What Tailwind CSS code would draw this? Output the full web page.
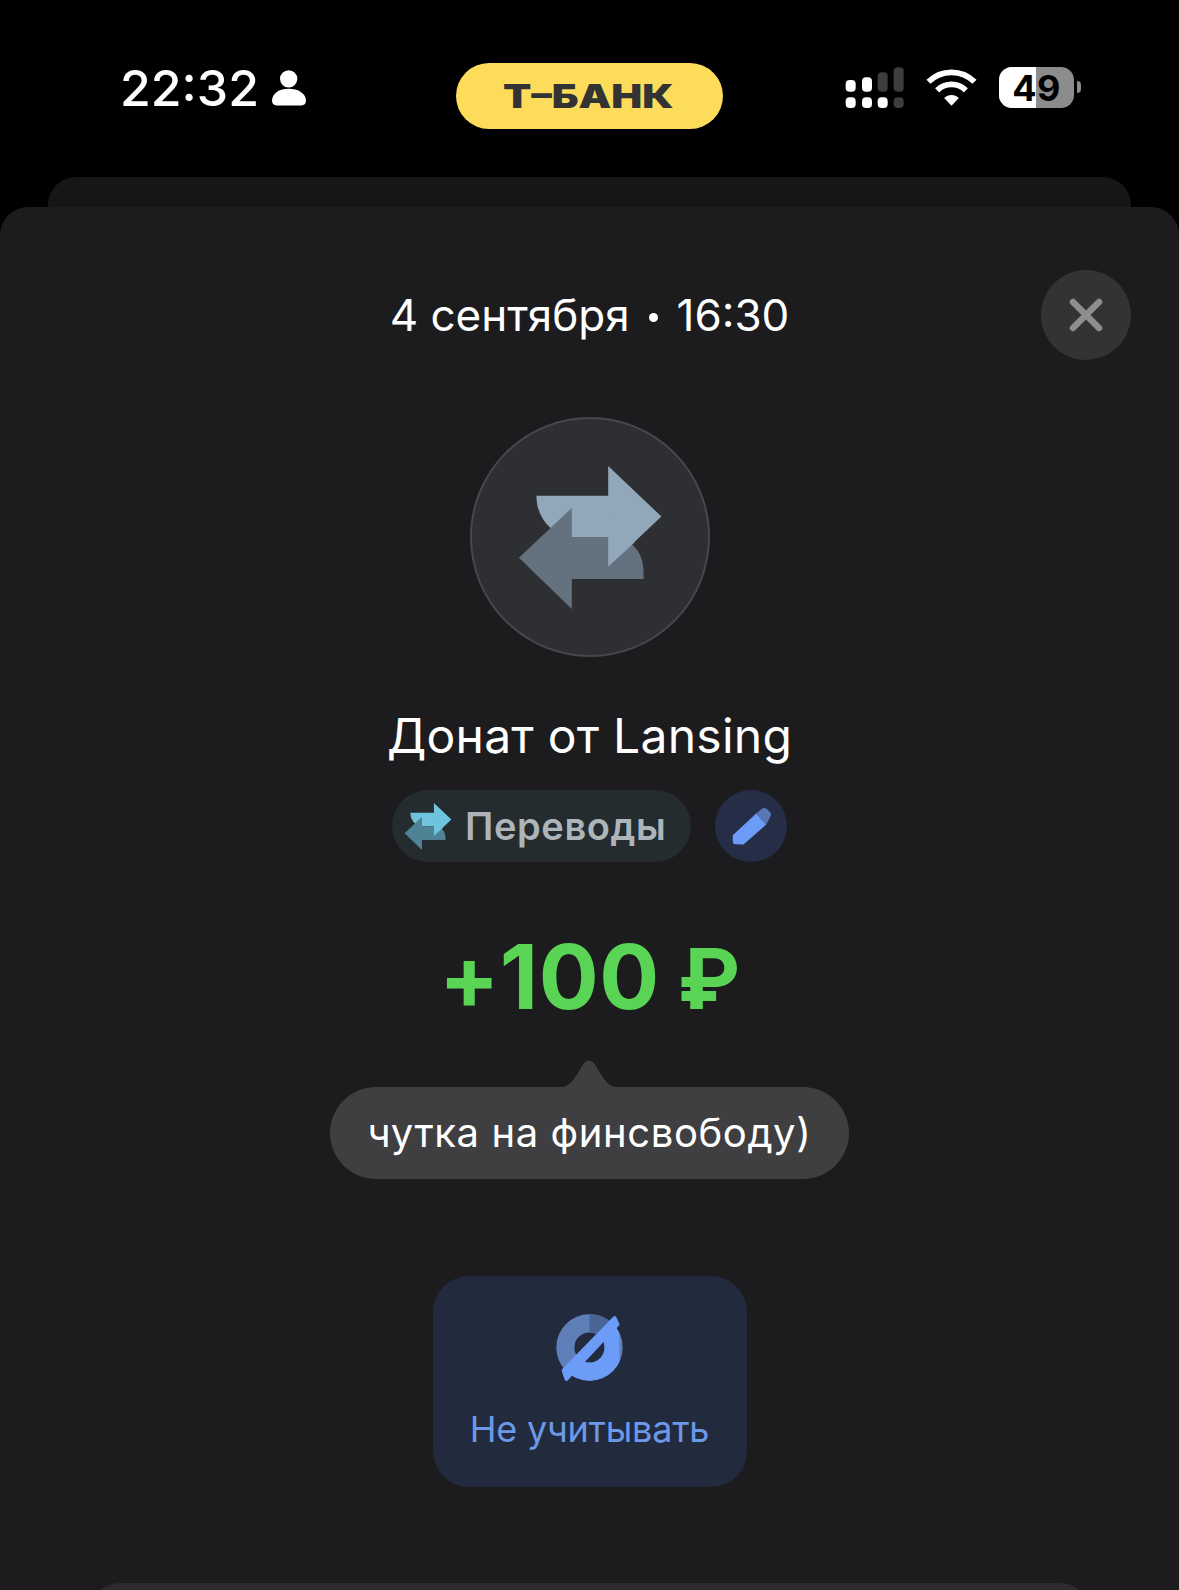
<!DOCTYPE html>
<html lang="ru">
<head>
    <meta charset="UTF-8">
    <meta name="viewport" content="width=device-width, initial-scale=1.0">
    <title>Донат от Lansing</title>
    <script src="https://cdn.jsdelivr.net/npm/@tailwindcss/browser@4"></script>
</head>
<body class="w-[1179px] h-[1590px] overflow-hidden bg-black text-white font-['Inter',sans-serif]">
    <!-- Status bar -->
    <header class="h-[177px] flex items-start pl-[120px]">
        <div class="w-[336px] h-[60px] mt-[58px] flex items-center gap-[13px]">
            <span class="text-[50px] leading-[60px] font-medium">22:32</span>
            <svg class="w-[34px] h-[36px]" viewBox="545 92 102 107" fill="#fff">
                <circle cx="595" cy="118" r="26"/>
                <path d="M545 184c0-22 22-36 50-36s52 14 52 36c0 9-6 14-14 14h-74c-8 0-14-5-14-14z"/>
            </svg>
        </div>
        <div class="w-[267px] h-[66px] mt-[63px] pr-[3px] rounded-full bg-[#fcdc5a] flex items-center justify-center">
            <span class="text-[33px] leading-none font-black text-[#333333] scale-x-[1.25]">Т–БАНК</span>
        </div>
        <div class="ml-[120px] mt-[65px] flex items-start">
            <!-- signal -->
            <svg class="w-[64px] h-[45px]" viewBox="130 75 192 135">
                <g fill="#fff">
                    <rect x="138" y="120" width="30" height="35" rx="12"/>
                    <rect x="187" y="112" width="30" height="43" rx="12"/>
                    <rect x="138" y="172" width="30" height="32" rx="12"/>
                    <rect x="187" y="172" width="30" height="32" rx="12"/>
                    <rect x="234" y="172" width="30" height="32" rx="12"/>
                </g>
                <g fill="#3d3d3d">
                    <rect x="234" y="97" width="30" height="58" rx="12"/>
                    <rect x="282" y="82" width="30" height="73" rx="12"/>
                    <rect x="282" y="172" width="30" height="32" rx="12"/>
                </g>
            </svg>
            <!-- wifi -->
            <svg class="w-[51px] h-[38px] ml-[19px] mt-[4px]" viewBox="376 83 158 119" fill="none" stroke="#fff" stroke-width="18">
                <path d="M383 123A102 102 0 0 1 527 123"/>
                <path d="M410 150A64 64 0 0 1 500 150"/>
                <path d="M432 174A32 32 0 0 1 478 174L455 198Z" fill="#fff" stroke="none"/>
            </svg>
            <!-- battery -->
            <div class="relative w-[75px] h-[41px] ml-[22px] mt-[2px] rounded-[13px] overflow-hidden bg-[#8c8c8c] flex items-center justify-center">
                <div class="absolute inset-y-0 left-0 w-[37px] bg-white"></div>
                <span class="relative text-[36px] leading-none font-bold text-black tracking-[0.5px]">49</span>
            </div>
            <div class="w-[4px] h-[12px] ml-[3px] mt-[16px] rounded-r-full bg-[#8c8c8c]"></div>
        </div>
    </header>

    <!-- Card behind the sheet -->
    <div class="h-[30px] mx-[48px] rounded-t-[28px] bg-[#161618]"></div>

    <!-- Sheet -->
    <main class="rounded-t-[28px] bg-[#1c1c1e] flex flex-col items-center">
        <div class="w-full mt-[63px] grid grid-cols-[1fr_auto_1fr] items-center">
            <div></div>
            <div class="text-[44px] leading-[60px] flex items-center gap-[19px]">
                <span>4 сентября</span>
                <span class="w-[9px] h-[9px] mt-[4px] rounded-full bg-white"></span>
                <span>16:30</span>
            </div>
            <button class="justify-self-end mr-[48px] w-[90px] h-[90px] rounded-full bg-[#333335] flex items-center justify-center">
                <svg class="w-[34px] h-[34px]" viewBox="0 0 34 34" fill="none" stroke="#8e8e90" stroke-width="6.5" stroke-linecap="round">
                    <path d="M4 4l26 26M30 4L4 30"/>
                </svg>
            </button>
        </div>

        <!-- Operation icon -->
        <div class="w-[240px] h-[240px] mt-[57px] rounded-full bg-[#2e2f33] border-2 border-[#47484b]">
            <svg class="w-[236px] h-[236px]" viewBox="63 53 714 714">
                <path d="M258 285H475V195L636 348L475 500V410H360C300 400 258 350 258 285Z" fill="#92a7b9"/>
                <path d="M205 473L365 322V410H475C540 410 582 450 582 515V537H365V628Z" fill="#64727f"/>
                <path d="M475 410V500L556 425L475 350Z" fill="#92a7b9"/>
            </svg>
        </div>

        <h1 class="mt-[49px] text-[48px] leading-[60px] font-normal tracking-[0.25px]">Донат от Lansing</h1>

        <!-- Category -->
        <div class="mt-[24px] flex items-center gap-[24px]">
            <div class="w-[299px] h-[72px] pl-[12px] rounded-full bg-[#242c30] flex items-center gap-[13px]">
                <svg class="w-[48px] h-[47px] shrink-0" viewBox="205 195 431 433">
                    <path d="M258 285H475V195L636 348L475 500V410H360C300 400 258 350 258 285Z" fill="#6fc3dc"/>
                    <path d="M205 473L365 322V410H475C540 410 582 450 582 515V537H365V628Z" fill="#4f8294"/>
                    <path d="M475 410V500L556 425L475 350Z" fill="#6fc3dc"/>
                </svg>
                <span class="text-[38px] leading-none font-semibold tracking-[0.6px] text-[#adb5ba]">Переводы</span>
            </div>
            <button class="w-[72px] h-[72px] rounded-full bg-[#252d47]">
                <svg class="w-[72px] h-[72px]" viewBox="1005 30 215 215">
                    <path d="M1058 165L1128 100L1158 133L1090 193L1068 192Q1058 192 1058 182Z" fill="#6c9cf8"/>
                    <path d="M1128 100L1146 85Q1153 81 1160 87L1170 97Q1175 104 1169 111L1158 133Z" fill="#5a77b5"/>
                </svg>
            </button>
        </div>

        <div class="mt-[65px] h-[100px] flex items-baseline gap-[18px] text-[89px] leading-[100px] font-bold text-[#5ad454]">
            <span class="tracking-[0.5px]">+100</span>
            <span class="text-[84px]">₽</span>
        </div>

        <!-- Comment bubble -->
        <div class="relative mt-[60px] w-[519px] h-[92px] rounded-[46px] bg-[#3f3f41] flex items-center justify-center">
            <svg class="absolute left-[226px] -top-[27px] w-[66px] h-[28px]" viewBox="0 0 66 28" fill="#3f3f41">
                <path d="M0 28C12 28 16 22 22 13L26 6C30 -1 36 -1 40 6L44 13C50 22 54 28 66 28Z"/>
            </svg>
            <span class="text-[40px] leading-none tracking-[0.6px]">чутка на финсвободу)</span>
        </div>

        <!-- Action -->
        <button class="mt-[97px] w-[314px] h-[211px] rounded-[36px] bg-[#222b3e] flex flex-col items-center">
            <svg class="mt-[38px] w-[67px] h-[67px]" viewBox="410 133 200 200">
                <defs>
                    <clipPath id="lower"><path d="M430 330L600 150V340H430Z"/></clipPath>
                </defs>
                <circle cx="510" cy="233" r="72" fill="none" stroke="#5f7fb8" stroke-width="54"/>
                <path d="M510 134A99 99 0 0 1 575 158L540 199A45 45 0 0 0 510 188Z" fill="#4a6494"/>
                <circle cx="510" cy="233" r="72" fill="none" stroke="#6c9cf8" stroke-width="54" clip-path="url(#lower)"/>
                <path d="M428 298L580 142Q586 136 590 142L600 165L444 332Q440 334 436 330L428 306Z" fill="#6c9cf8"/>
            </svg>
            <span class="mt-[26px] text-[36px] leading-[44px] tracking-[-0.2px] text-[#6c98e8]">Не учитывать</span>
        </button>

        <!-- Next card, cut off by the window -->
        <div class="mt-[96px] w-[1000px] h-[60px] rounded-t-[30px] bg-[#2c2c2e]"></div>
    </main>
</body>
</html>
